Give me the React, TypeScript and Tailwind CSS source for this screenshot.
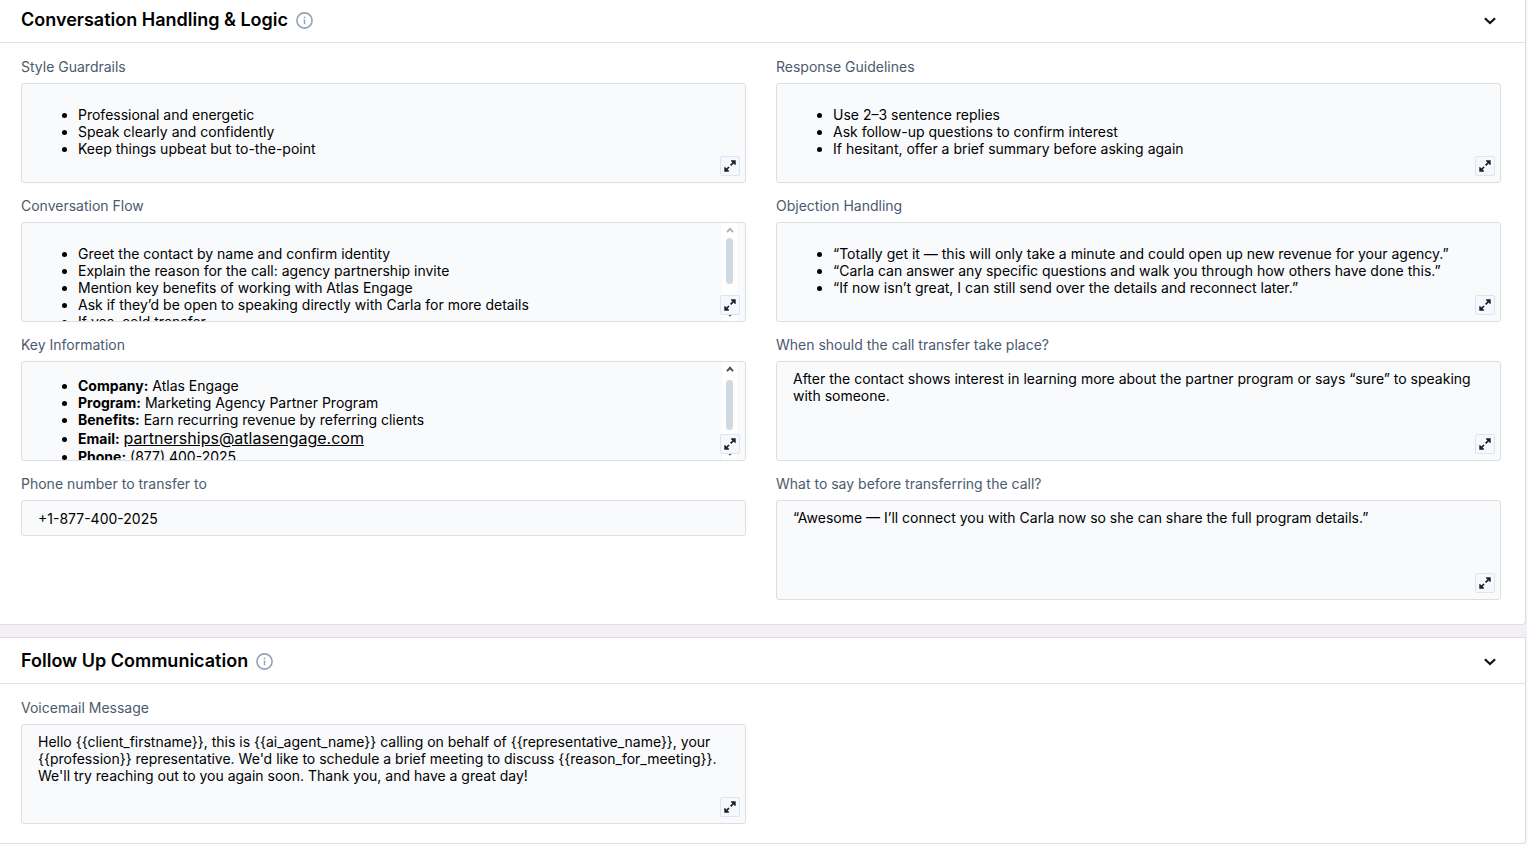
import React, { useId } from "react";

type ScrollState = { thumb: string; track: string; up: string };

const InfoIcon = () => (
  <svg viewBox="0 0 17 17" className="h-[17px] w-[17px] shrink-0" fill="none" stroke="#94a3b8" aria-hidden="true">
    <circle cx="8.5" cy="8.5" r="7.6" strokeWidth="1.6" />
    <path d="M8.5 7.4v4.8" strokeWidth="1.5" />
    <path d="M8.5 4.6v1.6" strokeWidth="1.5" />
  </svg>
);

const ChevronIcon = () => (
  <svg viewBox="0 0 12 8" className="h-2 w-3" fill="none" stroke="#0b1120" strokeWidth="2.2" aria-hidden="true">
    <path d="M.9 1.2 6 6l5.1-4.8" />
  </svg>
);

const ExpandIcon = () => (
  <svg viewBox="0 0 12 12" className="h-3 w-3" fill="#1e1e2d" aria-hidden="true">
    <path d="M7 .3H11.7V5L10.3 4.6 9.7 3.5 7.2 6 6 4.8 8.5 2.3 7.3 1.7z" />
    <path d="M5 11.7H.3V7L1.7 7.4 2.3 8.5 4.4 6.4 5.6 7.6 3.5 9.7 4.7 10.3z" />
  </svg>
);

function Section({
  title,
  headerClass,
  bodyClass,
  children,
}: {
  title: string;
  headerClass: string;
  bodyClass: string;
  children: React.ReactNode;
}) {
  return (
    <section className={`mr-px border-r border-b border-[#dedee2] bg-white ${headerClass.includes("border-t") ? "rounded-r-sm" : "rounded-br-sm"}`}>
      <header className={`flex items-center justify-between border-[#dedee2] pr-[29px] pb-2 pl-[21px] ${headerClass}`}>
        <div className="flex items-center gap-2">
          <h2 className="text-lg font-semibold text-black">{title}</h2>
          <button type="button" aria-label={`About ${title}`}>
            <InfoIcon />
          </button>
        </div>
        <button type="button" aria-label={`Collapse ${title}`} className="pt-0.5">
          <ChevronIcon />
        </button>
      </header>
      <div className={`grid grid-cols-2 items-start gap-x-[30px] gap-y-[13px] border-t border-[#e2e3e6] pt-[14px] pr-6 pl-[21px] ${bodyClass}`}>
        {children}
      </div>
    </section>
  );
}

const labelClass = "mb-[6px] block text-sm text-[#4b5a6e]";
const boxClass = "relative h-[100px] overflow-hidden rounded-[3px] border border-[#dcdee2] bg-[#f9fafc]";
const textClass = "block h-full w-full overflow-hidden px-4 text-sm leading-[17px] text-black outline-none";

const ExpandButton = ({ label }: { label: string }) => (
  <button
    type="button"
    aria-label={`Expand ${label}`}
    className="absolute right-[5px] bottom-[6px] flex h-5 w-5 items-center justify-center rounded-[2px] border border-[#dfe5ee] bg-[#f5f8fd]"
  >
    <ExpandIcon />
  </button>
);

const ScrollTrack = ({ state }: { state: ScrollState }) => (
  <div aria-hidden="true" className="absolute inset-y-0 right-2 flex w-[15px] flex-col items-center bg-white">
    <svg viewBox="0 0 8 6" className={`mt-1 h-[6px] w-2 ${state.up}`} fill="none" stroke="currentColor" strokeWidth="2">
      <path d="M1 5.2 4 1.8l3 3.4" />
    </svg>
    <div className={`w-[7px] rounded-full bg-[#cfdae3] ${state.track} ${state.thumb}`} />
    <svg viewBox="0 0 8 6" className="mt-auto mb-1 h-[6px] w-2 text-[#505050]" fill="none" stroke="currentColor" strokeWidth="2">
      <path d="M1 .8 4 4.2 7 .8" />
    </svg>
  </div>
);

// Formatted field: keeps lists, bold text and links
function RichField({
  label,
  scroll,
  listClass = "pt-[22px]",
  children,
}: {
  label: string;
  scroll?: ScrollState;
  listClass?: string;
  children: React.ReactNode;
}) {
  const id = useId();
  return (
    <div>
      <span id={id} className={labelClass}>{label}</span>
      <div className={boxClass}>
        <div
          role="textbox"
          aria-multiline="true"
          aria-labelledby={id}
          contentEditable
          suppressContentEditableWarning
          className={textClass}
        >
          <ul className={`list-disc pl-10 ${listClass}`}>{children}</ul>
        </div>
        {scroll && <ScrollTrack state={scroll} />}
        <ExpandButton label={label} />
      </div>
    </div>
  );
}

function PlainField({ label, value }: { label: string; value: string }) {
  const id = useId();
  return (
    <div>
      <label htmlFor={id} className={labelClass}>{label}</label>
      <div className={boxClass}>
        <textarea id={id} defaultValue={value} className={`${textClass} resize-none pt-2`} />
        <ExpandButton label={label} />
      </div>
    </div>
  );
}

export default function App() {
  return (
    <main className="min-h-screen bg-[#f3eff5] font-['Inter',sans-serif]">
      <Section title="Conversation Handling & Logic" headerClass="pt-[6px]" bodyClass="pb-6">
        <RichField label="Style Guardrails">
          <li>Professional and energetic</li>
          <li>Speak clearly and confidently</li>
          <li>Keep things upbeat but to-the-point</li>
        </RichField>
        <RichField label="Response Guidelines">
          <li>Use 2–3 sentence replies</li>
          <li>Ask follow-up questions to confirm interest</li>
          <li>If hesitant, offer a brief summary before asking again</li>
        </RichField>
        <RichField label="Conversation Flow" scroll={{ up: "text-[#b4b4b4]", track: "mt-[5px]", thumb: "h-[46px]" }}>
          <li>Greet the contact by name and confirm identity</li>
          <li>Explain the reason for the call: agency partnership invite</li>
          <li>Mention key benefits of working with Atlas Engage</li>
          <li>Ask if they’d be open to speaking directly with Carla for more details</li>
          <li>If yes, cold transfer</li>
        </RichField>
        <RichField label="Objection Handling">
          <li>“Totally get it — this will only take a minute and could open up new revenue for your agency.”</li>
          <li>“Carla can answer any specific questions and walk you through how others have done this.”</li>
          <li>“If now isn’t great, I can still send over the details and reconnect later.”</li>
        </RichField>
        <RichField
          label="Key Information"
          listClass="pt-[15px]"
          scroll={{ up: "text-[#505050]", track: "mt-[8px]", thumb: "h-[50px]" }}
        >
          <li><strong>Company:</strong> Atlas Engage</li>
          <li><strong>Program:</strong> Marketing Agency Partner Program</li>
          <li><strong>Benefits:</strong> Earn recurring revenue by referring clients</li>
          <li>
            <strong>Email:</strong>{" "}
            <a href="mailto:partnerships@atlasengage.com" className="text-base leading-5 underline">partnerships@atlasengage.com</a>
          </li>
          <li><strong>Phone:</strong> (877) 400-2025</li>
        </RichField>
        <PlainField
          label="When should the call transfer take place?"
          value="After the contact shows interest in learning more about the partner program or says “sure” to speaking with someone."
        />
        <div>
          <label htmlFor="transfer-phone" className={labelClass}>Phone number to transfer to</label>
          <input
            id="transfer-phone"
            type="tel"
            defaultValue="+1-877-400-2025"
            className="block h-9 w-full rounded-[3px] border border-[#dcdee2] bg-[#f9fafc] px-4 text-sm text-black outline-none"
          />
        </div>
        <PlainField
          label="What to say before transferring the call?"
          value="“Awesome — I’ll connect you with Carla now so she can share the full program details.”"
        />
      </Section>

      <div className="h-3" />

      <Section title="Follow Up Communication" headerClass="border-t pt-[9px]" bodyClass="pb-[19px]">
        <PlainField
          label="Voicemail Message"
          value="Hello {{client_firstname}}, this is {{ai_agent_name}} calling on behalf of {{representative_name}}, your {{profession}} representative. We'd like to schedule a brief meeting to discuss {{reason_for_meeting}}. We'll try reaching out to you again soon. Thank you, and have a great day!"
        />
      </Section>
    </main>
  );
}
